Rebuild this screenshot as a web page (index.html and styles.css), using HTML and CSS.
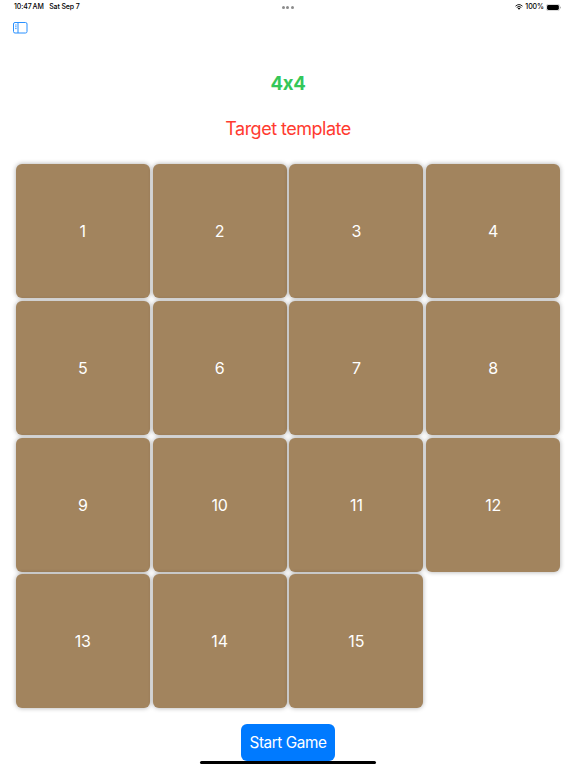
FILE: index.html
```html
<!DOCTYPE html>
<html lang="en">
<head>
<meta charset="utf-8">
<title>4x4</title>
<link rel="stylesheet" href="styles.css">
</head>
<body>
<header class="status">
  <div class="clock"><span>10:47<b></b>AM</span><span>Sat Sep 7</span></div>
  <div class="dots"><i></i><i></i><i></i></div>
  <div class="power">
    <svg class="wifi" viewBox="0 0 16 12"><path d="M1 4.3Q8-2 15 4.3M3.4 6.9Q8 2.8 12.6 6.9" fill="none" stroke="#000" stroke-width="1.8"/><path d="M5.3 8.6Q8 6.4 10.7 8.6L8 11.4Z"/></svg>
    <span>100%</span>
    <svg class="battery" viewBox="0 0 28 13"><rect x=".5" y=".5" width="25" height="12" rx="4" fill="none" stroke="#aaa"/><rect x="2" y="2" width="22" height="9" rx="2.6"/><path d="M26.5 4.5q1.5.5 1.5 2t-1.5 2z" fill="#999"/></svg>
  </div>
</header>
<nav class="toolbar">
  <svg class="sidebar" viewBox="0 0 15 12" fill="none" stroke="#2990ff"><rect x=".5" y=".5" width="13.5" height="10.5" rx="1.5"/><path d="M5 .5V11"/><path d="M2 3h1.7M2 4.8h1.7M2 6.6h1.7" stroke-width=".8"/></svg>
</nav>
<main>
  <h1>4x4</h1>
  <h2>Target template</h2>
  <section class="board">
    <div class="tile">1</div><div class="tile">2</div><div class="tile">3</div><div class="tile">4</div>
    <div class="tile">5</div><div class="tile">6</div><div class="tile">7</div><div class="tile">8</div>
    <div class="tile">9</div><div class="tile">10</div><div class="tile">11</div><div class="tile">12</div>
    <div class="tile">13</div><div class="tile">14</div><div class="tile">15</div>
  </section>
  <button class="start">Start Game</button>
</main>
<div class="home"></div>
</body>
</html>
```
FILE: styles.css
```css
* { box-sizing: border-box; }
body { margin: 0; width: 576px; height: 768px; overflow: hidden; background: #fff; font-family: Inter, sans-serif; font-feature-settings: "calt" 0; }
.status { display: grid; grid-template-columns: 1fr auto 1fr; align-items: center; height: 14px; padding: 0 15px 0 14px; font-size: 7px; line-height: 14px; font-weight: 500; letter-spacing: -.12px; }
.clock { display: flex; gap: 5.5px; white-space: nowrap; }
.clock b { display: inline-block; width: 1px; }
.dots { display: flex; gap: 1.5px; }
.dots i { width: 3px; height: 3px; border-radius: 50%; background: #8c8c8c; }
.power { display: flex; justify-content: flex-end; align-items: center; gap: 2px; }
.power span { letter-spacing: -.05px; }
.wifi { width: 8px; height: 6px; }
.battery { width: 15px; height: 7px; }
.toolbar { height: 28px; padding: 8px 12.5px; }
.sidebar { display: block; width: 15px; height: 12px; }
main { display: flex; flex-direction: column; align-items: center; }
h1 { margin: 29px 0 0; font-size: 18.6px; line-height: 24px; font-weight: 700; letter-spacing: -.3px; color: #34c759; }
h2 { margin: 22px 0 0; font-size: 18px; line-height: 24px; font-weight: 400; letter-spacing: -.5px; color: #ff3b30; white-space: nowrap; }
.board { display: grid; grid-template-columns: repeat(4, 134px); grid-auto-rows: 134px; gap: 2.8px; margin-top: 23px; }
.tile { display: flex; align-items: center; justify-content: center; border-radius: 6px; background: #a2845e; color: #fff; font-size: 16px; font-weight: 400; letter-spacing: -.1px; box-shadow: 0 0 5px rgba(0,0,0,.33); }
.start { margin-top: 15.6px; width: 94px; height: 37px; padding: 0; border: 0; border-radius: 6px; background: #007aff; color: #fff; font: 400 15.3px/37px Inter, sans-serif; letter-spacing: -.42px; white-space: nowrap; }
.home { position: absolute; left: 200px; top: 760.5px; width: 176px; height: 3px; border-radius: 2px; background: #000; }
```
